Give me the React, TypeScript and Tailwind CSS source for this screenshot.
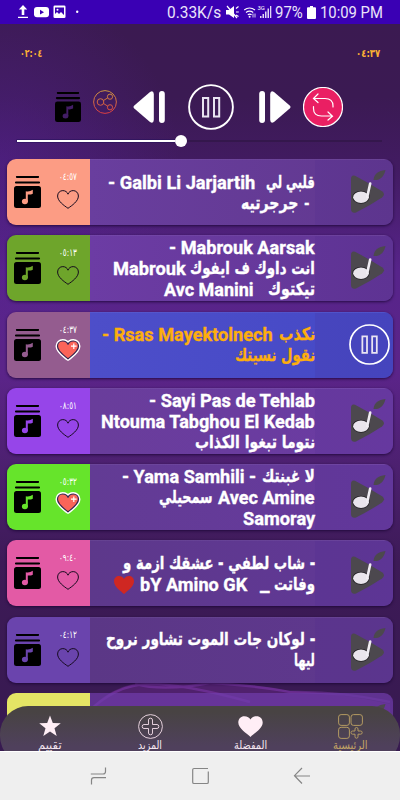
import { useLayoutEffect, useRef, useState } from "react"
import type { ReactNode } from "react"
import clsx from "clsx"

type Segment = { text: string; width: number; gap?: number; arabic?: boolean }

type Track = {
  time: string
  cover: string
  panel: string
  liked?: boolean
  playing?: boolean
  lines: Segment[][]
}

const ARABIC = "font-['DejaVu_Sans','Noto_Sans',sans-serif]"

const TRACKS: Track[] = [
  {
    time: "٠٤:٥٧",
    cover: "bg-[#fc9c84] text-[#fc9c84]",
    panel: "bg-linear-to-r from-[#693e9e] to-[#61388f]",
    lines: [
      [
        { text: "- Galbi Li Jarjartih", width: 147 },
        { text: "قلبي لي", width: 49, gap: 11, arabic: true },
      ],
      [
        { text: "جرجرتيه", width: 57, arabic: true },
        { text: "-", width: 6, gap: 6 },
        { text: "", width: 5 },
      ],
    ],
  },
  {
    time: "٠٥:١٣",
    cover: "bg-[#6ea52b] text-[#6ea52b]",
    panel: "bg-linear-to-r from-[#6c3ca4] to-[#623695]",
    lines: [
      [{ text: "- Mabrouk Aarsak", width: 146 }],
      [
        { text: "Mabrouk", width: 73 },
        { text: "انت داوك ف ايفوك", width: 125, gap: 4, arabic: true },
      ],
      [
        { text: "Avc Manini", width: 90 },
        { text: "تيكتوك", width: 47, gap: 14, arabic: true },
      ],
    ],
  },
  {
    time: "٠٤:٣٧",
    cover: "bg-[#945c8f] text-[#945c8f]",
    panel: "bg-linear-to-r from-[#4d4ec9] to-[#4549c6]",
    liked: true,
    playing: true,
    lines: [
      [
        { text: "- Rsas Mayektolnech", width: 171 },
        { text: "نكذب", width: 36, gap: 6, arabic: true },
      ],
      [{ text: "نقول نسيتك", width: 80, arabic: true }],
    ],
  },
  {
    time: "٠٨:٥١",
    cover: "bg-[#9645e9] text-[#9645e9]",
    panel: "bg-linear-to-r from-[#693d9b] to-[#6b3ba3]",
    lines: [
      [{ text: "- Sayi Pas de Tehlab", width: 166 }],
      [{ text: "Ntouma Tabghou El Kedab", width: 214 }],
      [{ text: "نتوما تبغوا الكذاب", width: 120, arabic: true }],
    ],
  },
  {
    time: "٠٥:٣٢",
    cover: "bg-[#66e42b] text-[#66e42b]",
    panel: "bg-linear-to-r from-[#623b94] to-[#673a9e]",
    liked: true,
    lines: [
      [
        { text: "- Yama Samhili -", width: 134 },
        { text: "لا غبنتك", width: 53, gap: 6, arabic: true },
      ],
      [
        { text: "سمحيلي", width: 54, arabic: true },
        { text: "Avec Amine", width: 97, gap: 5 },
      ],
      [{ text: "Samoray", width: 72 }],
    ],
  },
  {
    time: "٠٩:٤٠",
    cover: "bg-[#e35aa5] text-[#e35aa5]",
    panel: "bg-linear-to-r from-[#5d388b] to-[#613897]",
    lines: [
      [{ text: "- شاب لطفي - عشقك ازمة و", width: 192, arabic: true }],
      [
        { text: "❤", width: 20 },
        { text: "bY Amino GK", width: 107, gap: 6 },
        { text: "_", width: 9, gap: 13 },
        { text: "وفاتت", width: 41, gap: 5, arabic: true },
      ],
    ],
  },
  {
    time: "٠٤:١٢",
    cover: "bg-[#6a44ad] text-[#6a44ad]",
    panel: "bg-linear-to-r from-[#5b3786] to-[#5f388f]",
    lines: [
      [{ text: "- لوكان جات الموت تشاور نروح", width: 209, arabic: true }],
      [{ text: "ليها", width: 21, arabic: true }],
    ],
  },
]

// Squeezes or stretches one run of text to a given width.
function FitText({
  children,
  width,
  className,
  rtl,
}: {
  children: string
  width: number
  className?: string
  rtl?: boolean
}) {
  const ref = useRef<HTMLSpanElement>(null)
  const [scale, setScale] = useState(1)

  useLayoutEffect(() => {
    const natural = ref.current?.offsetWidth ?? 0
    if (natural > 0) setScale(width / natural)
  }, [width, children])

  return (
    <span className={clsx("flex shrink-0", className)} style={{ width }} dir="ltr">
      <span
        ref={ref}
        dir={rtl ? "rtl" : "ltr"}
        className="inline-block shrink-0 origin-left whitespace-pre"
        style={{ transform: `scaleX(${scale})` }}
      >
        {children}
      </span>
    </span>
  )
}

function RedHeart() {
  return (
    <svg viewBox="0 0 20 18" className="mt-0.5 h-[18px] w-5 shrink-0">
      <path d="M10 18C7 15 0 11 0 5.2C0 2 2.3 0 5 0c2.300 0 4 1.200 5 3c1-1.800 2.700-3 5-3c2.700 0 5 2 5 5.200C20 11 13 15 10 18Z" fill="#cf2722" />
    </svg>
  )
}

function PlaylistIcon({ className, noteClass }: { className?: string; noteClass?: string }) {
  return (
    <svg viewBox="0 0 27 32" className={className} preserveAspectRatio="none">
      <path d="M3 1h21M2 6.500h23" stroke="#000" strokeWidth="2.200" strokeLinecap="round" />
      <rect y="10" width="27" height="22" rx="2.500" fill="#000" />
      <g className={noteClass} fill="currentColor">
        <ellipse cx="10.900" cy="25.500" rx="3" ry="2.700" />
        <path d="M11.800 15.200q3.500 1 7-1.500v4q-2.600 1.200-5 .7v7.400h-2Z" />
      </g>
    </svg>
  )
}

function HeartOutline() {
  return (
    <svg viewBox="0 0 22 19" className="h-[19px] w-[22px]" fill="none" stroke="#160b1e">
      <path d="M11 18.300C7 15.500.6 11.200.6 6C.6 2.800 3 .6 5.800.6C8.300.6 10.300 2 11 4.200C11.700 2 13.700.6 16.200.6C19 .6 21.400 2.800 21.400 6c0 5.200-6.400 9.500-10.400 12.300Z" strokeWidth="1" />
    </svg>
  )
}

function HeartFilled() {
  return (
    <svg viewBox="0 0 28 24" className="h-6 w-7" strokeLinejoin="round">
      <path
        d="M14 20.800C10 17.500 3.500 13.500 3.500 8.300C3.500 5 6 3 8.700 3c2.500 0 4.500 1.400 5.300 3.400C14.800 4.400 16.800 3 19.300 3c2.700 0 5.200 2 5.200 5.300c0 5.200-6.500 9.200-10.500 12.500Z"
        fill="#fff"
        stroke="#fff"
        strokeWidth="4"
      />
      <path
        d="M14 20.800C10 17.500 3.500 13.500 3.500 8.300C3.500 5 6 3 8.700 3c2.500 0 4.500 1.400 5.300 3.400C14.800 4.400 16.800 3 19.300 3c2.700 0 5.200 2 5.200 5.300c0 5.200-6.500 9.200-10.500 12.500Z"
        fill="#fa6459"
        stroke="#33244f"
        strokeWidth="1.200"
      />
      <path d="M19.800 5.500v5.500M17 8.200h5.600" stroke="#fff" strokeWidth="1.200" />
    </svg>
  )
}

function TrackLogo({ className }: { className?: string }) {
  return (
    <svg viewBox="0 0 36 44" className={className}>
      <path d="M1 9Q1 4.500 5 5.700Q19 13 32 21.200Q36 24 32 27.500Q20 35.500 6 42.500Q1 43.500 1 39Z" fill="#4c484e" />
      <path d="M23.500 10C24 4 28 .8 35.500 0C34 7 29.500 10.800 23.500 10Z" fill="#4c484e" />
      <ellipse cx="11" cy="27.200" rx="8.600" ry="6.500" fill="#222024" />
      <ellipse cx="11" cy="27.200" rx="7.900" ry="5.700" fill="#e9e5ec" />
      <path d="M17.200 27L20.200 13.500" stroke="#f0edf3" strokeWidth="2.600" strokeLinecap="round" />
    </svg>
  )
}

function PauseIcon({ className }: { className?: string }) {
  return (
    <svg viewBox="0 0 46 46" className={className} fill="none" stroke="#fff" strokeWidth="1.900">
      <circle cx="23" cy="23" r="21.900" />
      <path d="M15 14h5.200v18.500H15ZM26 14h5.200v18.500H26Z" stroke="#e9e4f2" strokeWidth="2" />
    </svg>
  )
}

function TrackCard({ track }: { track: Track }) {
  return (
    <div className="flex h-[66px] shrink-0 overflow-hidden rounded-[9px] shadow-[0_1px_3px_rgba(25,5,50,0.8)]">
      <div className={clsx("flex w-[83px] shrink-0", track.cover)}>
        <PlaylistIcon className="mt-[17px] ml-[7px] h-8 w-[27px] shrink-0" />
        <div className="flex w-[54px] shrink-0 flex-col items-center pt-3">
          <FitText width={18} className={clsx("h-3 text-[10px] leading-3 text-white", ARABIC)}>
            {track.time}
          </FitText>
          <div className="flex h-8 items-center justify-center pb-[3px]">
            {track.liked ? <HeartFilled /> : <div className="pt-1"><HeartOutline /></div>}
          </div>
        </div>
      </div>
      <div className={clsx("flex min-w-0 flex-1 border-t border-white/5", track.panel)}>
        <div
          className={clsx(
            "flex w-[225px] shrink-0 flex-col justify-center font-['Roboto'] text-[19px] font-bold leading-[21px] [-webkit-text-stroke:0.35px_currentColor]",
            track.playing ? "text-[#fdae0d]" : "text-white"
          )}
        >
          {track.lines.map((line, i) => (
            <div key={i} className="flex h-[21px] justify-end">
              {line.map((seg, j) => (
                <div key={j} className="flex shrink-0" style={{ marginLeft: seg.gap ?? 0 }}>
                  {seg.text === "❤" ? (
                    <RedHeart />
                  ) : (
                    <FitText
                      width={seg.width}
                      rtl={seg.arabic}
                      className={seg.arabic ? clsx("text-[17.5px]", ARABIC) : undefined}
                    >
                      {seg.text}
                    </FitText>
                  )}
                </div>
              ))}
            </div>
          ))}
        </div>
        <div className="flex flex-1 justify-end bg-[#4a2a90]/15 pr-[7px]">
          {track.playing ? (
            <PauseIcon className="mt-[11px] -mr-1 h-[41px] w-[41px]" />
          ) : (
            <TrackLogo className="mt-2.5 h-11 w-9" />
          )}
        </div>
      </div>
    </div>
  )
}

function StatusBar() {
  return (
    <div className="flex h-6 shrink-0 items-center bg-[#3a00b4] pt-0.5 font-['Roboto'] text-[16px] text-[#eae4fa]">
      <svg viewBox="0 0 62 14" className="mb-0.5 ml-[18px] h-3.5 w-[62px]" fill="#fff">
        <path d="M5 0l4.200 4.500H6.300V10H3.700V4.500H.8ZM0 11.800h10v1.300H0Z" />
        <rect x="16" y="2" width="15" height="10.300" rx="3" />
        <path d="M22 4.800v4.700l4-2.300Z" fill="#3a00b4" />
        <rect x="35.500" y=".5" width="12" height="12.500" rx="1.300" />
        <path d="M37 2.500h9v7.500l-3-3-2 2-2-2-2 2Z" fill="#3a00b4" />
        <circle cx="39.500" cy="4.800" r="1" />
        <circle cx="59.200" cy="6.800" r="1.200" />
      </svg>
      <FitText width={54} className="ml-[87px]">0.33K/s</FitText>
      <svg viewBox="0 0 46 14" className="mb-0.5 ml-[5px] h-3.5 w-[46px]" fill="#fff">
        <path d="M0 5h3l5-4v12L3 9.500H0Z" />
        <path d="M1 1l10 12M10 3.500l2.500-2M10 7h2.800M10 10l2.500 1.500" stroke="#fff" strokeWidth="1.200" />
        <g fill="none" stroke="#fff" strokeWidth="1.200">
          <path d="M18.200 5q5.300-4 10.800 0M20 7.500q3.500-2.700 7.200 0M21.800 9.800q2-1.500 3.800 0" />
        </g>
        <circle cx="23.600" cy="11.800" r="1" />
        <path d="M27 8.500v4M29 8.500v4" stroke="#fff" strokeWidth=".8" />
        <path d="M34 11h1.500v2H34ZM36.500 9H38v4h-1.500ZM39 6.500h1.500V13H39ZM41.500 3.500H43V13h-1.500ZM44 1h1.300v12H44Z" fillOpacity=".85" />
        <text x="31.500" y="5.300" fontSize="6" fontFamily="Roboto">3G</text>
      </svg>
      <FitText width={28} className="ml-[3px]">97%</FitText>
      <svg viewBox="0 0 9 13" className="mb-0.5 ml-1 h-[13px] w-[9px]" fill="#fff">
        <path d="M3 0h3v1.200h2q1 0 1 1V12q0 1-1 1H1q-1 0-1-1V2.200q0-1 1-1h2Z" />
      </svg>
      <FitText width={63} className="ml-1">10:09 PM</FitText>
    </div>
  )
}

function Controls() {
  return (
    <div className="flex h-[46px] items-center pl-[55px]">
      <PlaylistIcon className="h-[30px] w-[26px]" noteClass="text-[#431d66]" />
      <svg viewBox="0 0 24 24" className="mb-2.5 ml-3 h-6 w-6" fill="none" stroke="url(#share)" strokeWidth="1">
        <defs>
          <linearGradient id="share" x1="0" y1="0" x2="0" y2="24" gradientUnits="userSpaceOnUse">
            <stop stopColor="#c99642" />
            <stop offset="1" stopColor="#db3a42" />
          </linearGradient>
        </defs>
        <circle cx="12" cy="12" r="11.400" />
        <circle cx="7.500" cy="12" r="3.300" />
        <circle cx="17" cy="6.700" r="2.600" />
        <circle cx="17" cy="17.300" r="2.600" />
        <path d="M10.500 10.500l4.200-2.600M10.500 13.500l4.200 2.600" />
      </svg>
      <svg viewBox="0 0 32 32" className="ml-4 h-8 w-8" fill="#fff">
        <path d="M17 1Q20.500-1 20.800 3V29Q20.500 33 17 31L1.300 17.500Q-.3 16 1.300 14.500Z" />
        <rect x="26" width="5.800" height="32" rx="2.900" />
      </svg>
      <PauseIcon className="ml-[23px] h-[46px] w-[46px]" />
      <svg viewBox="0 0 32 32" className="ml-[25px] h-8 w-8" fill="#fff">
        <path d="M15 1Q11.500-1 11.200 3V29Q11.500 33 15 31L30.700 17.500Q32.300 16 30.700 14.500Z" />
        <rect x=".2" width="5.800" height="32" rx="2.900" />
      </svg>
      <svg viewBox="0 0 40 40" className="ml-3 h-10 w-10" fill="none" stroke="#fff">
        <circle cx="20" cy="20" r="19.500" fill="#ea1f63" strokeWidth="1.200" />
        <path
          d="M30 20v-1q0-7.500-8-7.500H11M15 7l-4.500 4.500L15 15.500M10.500 19.500v2q0 7.500 8 7.500H29M25 25l4.500 4.200L25 33"
          strokeWidth="1.200"
          strokeLinecap="round"
        />
      </svg>
    </div>
  )
}

function TabItem({ label, width, children, className }: { label: string; width: number; children: ReactNode; className?: string }) {
  return (
    <div className={clsx("flex w-[100px] flex-col items-center pt-[7px]", className)}>
      <div className="flex h-[26px] items-center justify-center">{children}</div>
      <FitText width={width} rtl className={clsx("h-3 text-[11.5px] leading-[12px]", ARABIC)}>
        {label}
      </FitText>
    </div>
  )
}

function BottomTabs() {
  return (
    <div className="absolute inset-x-0 top-[706px] h-[45px] overflow-hidden">
      <div className="flex h-[58px] rounded-[28px] bg-linear-to-b from-[#484343] from-10% to-[#4f405c] to-70% text-[#f6e8f1]">
        <TabItem label="تقييم" width={24}>
          <svg viewBox="0 0 22 22" className="h-[22px] w-[22px]" fill="#ffeef6">
            <path d="M11 .5l2.800 7.400 8 .3-6.300 5 2.200 7.800L11 16.600 4.300 21l2.200-7.800-6.300-5 8-.3Z" />
          </svg>
        </TabItem>
        <TabItem label="المزيد" width={24}>
          <svg viewBox="0 0 25 25" className="h-[25px] w-[25px]" fill="none" stroke="#f5dfea" strokeWidth=".9">
            <circle cx="12.500" cy="12.500" r="11.900" />
            <path d="M10.500 10.500V6q0-1.800 2-1.800t2 1.800v4.500H19q1.800 0 1.800 2t-1.800 2h-4.500V19q0 1.800-2 1.800t-2-1.800v-4.500H6q-1.800 0-1.800-2t1.800-2Z" />
          </svg>
        </TabItem>
        <TabItem label="المفضلة" width={33}>
          <svg viewBox="0 0 25 21" className="h-[21px] w-[25px]" fill="#ffeef6">
            <path d="M12.500 21C9 17.500.3 12.500.3 6.500C.3 2.500 3 .2 6.300.2c3 0 5.200 1.300 6.200 3.300C13.500 1.500 15.700.2 18.700.2c3.300 0 6 2.300 6 6.300C24.700 12.500 16 17.500 12.500 21Z" />
          </svg>
        </TabItem>
        <TabItem label="الرئيسية" width={35} className="text-[#c3a565]">
          <svg viewBox="0 0 25 25" className="h-[25px] w-[25px]" fill="none" stroke="#b39a62" strokeWidth="1">
            <rect x=".6" y=".6" width="10.800" height="10.800" rx="2.500" />
            <rect x="13" y=".6" width="11.400" height="10.800" rx="2.500" />
            <rect x=".6" y="13.300" width="10.800" height="11.100" rx="2.500" />
            <path d="M17 17v-2q0-1.500 1.500-1.500T20 15v2h2.500q1.700 0 1.700 1.600t-1.700 1.600H20v2.400q0 1.600-1.500 1.600T17 22.600v-2.400h-2.400q-1.600 0-1.600-1.600T14.600 17Z" />
          </svg>
        </TabItem>
      </div>
    </div>
  )
}

function SystemNav() {
  return (
    <div className="flex h-[49px] shrink-0 items-center border-t border-white bg-[#efefef]">
      <svg viewBox="0 0 220 18" className="ml-[90px] h-[18px] w-[220px]" fill="none" stroke="#858585" strokeWidth="1.200">
        <path d="M.8 7H13q2.500 0 2.500-2.500V.5M1.500 17.500V13q0-2.300 2.500-2.300h12" />
        <path d="M118 1.500h-14q-1.300 0-1.300 1.300v12.400q0 1.300 1.300 1.300h13q1.300 0 1.300-1.300V4.500" />
        <path d="M220 9H205M212 1l-7.500 7.700L212 16.500" />
      </svg>
    </div>
  )
}

// Light trails that show behind the last rows of the list.
function Waves() {
  return (
    <svg viewBox="0 0 400 60" className="absolute inset-x-0 top-[660px] h-[60px] w-[400px]" fill="none">
      <path d="M80 60Q110 22 150 22Q240 20 290 31Q340 33 390 44V60Z" fill="#8b35b5" fillOpacity=".28" />
      <path d="M85 55Q115 24 150 24T250 42M135 24Q165 32 215 22M210 23Q260 26 290 32Q340 31 390 42" stroke="#a548dd" strokeOpacity=".3" strokeWidth="2.500" />
    </svg>
  )
}

export default function App() {
  return (
    <div className="relative flex h-[800px] w-[400px] flex-col overflow-hidden bg-[#3a1b52]">
      <StatusBar />
      <div className="relative h-[727px] overflow-hidden bg-[radial-gradient(circle_at_0px_140px,rgba(90,35,160,0.45),transparent_180px),linear-gradient(to_bottom,#3b1a51_0%,#3b1a53_10%,#421b62_20%,#57248a_34%,#5b2489_48%,#4c206f_61%,#3d1a57_74%,#371a50_100%)]">
        <div className="flex justify-between px-5 pt-[22px]">
          <FitText width={22} className={clsx("h-4 text-[11px] font-bold leading-4 text-[#fbb034]", ARABIC)}>
            ٠٢:٠٤
          </FitText>
          <FitText width={24} className={clsx("h-4 text-[11px] font-bold leading-4 text-[#fbb034]", ARABIC)}>
            ٠٤:٣٧
          </FitText>
        </div>
        <div className="pt-[22px]">
          <Controls />
        </div>
        <div className="mt-[5px] flex h-3 items-center pl-[17px]">
          <div className="h-0.5 w-[158px] bg-white shadow-[0_0_0_0.5px_#23105a]" />
          <div className="h-3 w-3 rounded-full bg-white" />
          <div className="h-0.5 w-[195px] bg-[#34174c]" />
        </div>
      </div>
      <Waves />
      <div className="absolute inset-x-0 top-[159px] flex h-[592px] flex-col gap-[10.3px] overflow-hidden px-[7px]">
        {TRACKS.map((track) => (
          <TrackCard key={track.time} track={track} />
        ))}
        <div className="flex h-[66px] shrink-0 overflow-hidden rounded-[9px]">
          <div className="w-[83px] bg-[#e4e565]" />
          <div className="flex flex-1 justify-end bg-[#713dac]/70 pr-[7px]">
            <TrackLogo className="mt-[11px] h-11 w-9" />
          </div>
        </div>
      </div>
      <BottomTabs />
      <SystemNav />
    </div>
  )
}
